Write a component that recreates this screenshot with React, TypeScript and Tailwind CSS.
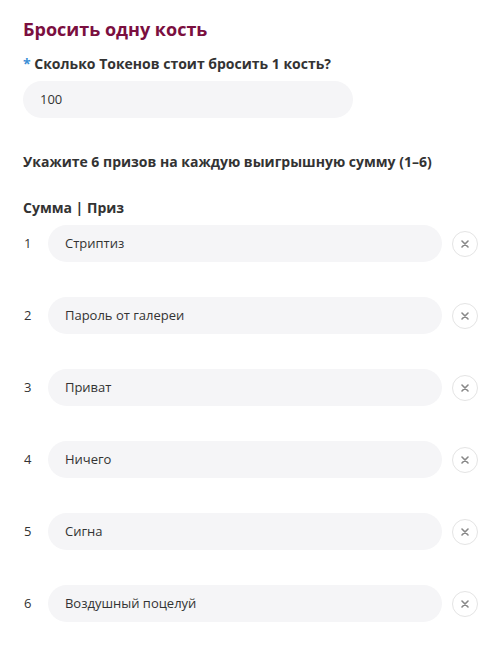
const PRIZES = [
  "Стриптиз",
  "Пароль от галереи",
  "Приват",
  "Ничего",
  "Сигна",
  "Воздушный поцелуй",
];

const App = () => {
  return (
    <div
      className="min-h-screen bg-white text-[#333] px-[23px] pt-[17px]"
      style={{ fontFamily: '"Open Sans", "Noto Sans", sans-serif' }}
    >
      <h1 className="text-[18px] font-bold leading-[24px] text-[#7b0f3f]">
        Бросить одну кость
      </h1>

      <div className="mt-[13px] text-[14px] font-bold leading-[20px]">
        <span className="text-[#3b8fd6]">*</span> Сколько Токенов стоит бросить 1 кость?
      </div>
      <div className="mt-[7px] w-[330px] h-[37px] rounded-full bg-[#f5f5f7] flex items-center px-[17px] text-[13px]">
        100
      </div>

      <div className="mt-[34px] text-[14px] font-bold leading-[20px]">
        Укажите 6 призов на каждую выигрышную сумму (1–6)
      </div>

      <div className="mt-[26px] text-[14px] font-bold leading-[20px]">
        Сумма | Приз
      </div>

      <div className="mt-[7px] flex flex-col gap-[35px]">
        {PRIZES.map((p, i) => (
          <div key={p} className="flex items-center">
            <div className="w-[25px] text-[13px] pl-[1px]">{i + 1}</div>
            <div className="w-[395px] h-[37px] rounded-full bg-[#f5f5f7] flex items-center px-[17px] text-[13px]">
              {p}
            </div>
            <button className="ml-[10px] w-[26px] h-[26px] rounded-full border border-[#e4e4e4] flex items-center justify-center text-[#888]">
              <svg width="8" height="8" viewBox="0 0 8 8">
                <path d="M1 1L7 7M7 1L1 7" stroke="currentColor" strokeWidth="1.6" strokeLinecap="round" />
              </svg>
            </button>
          </div>
        ))}
      </div>
    </div>
  );
};

export default App;
